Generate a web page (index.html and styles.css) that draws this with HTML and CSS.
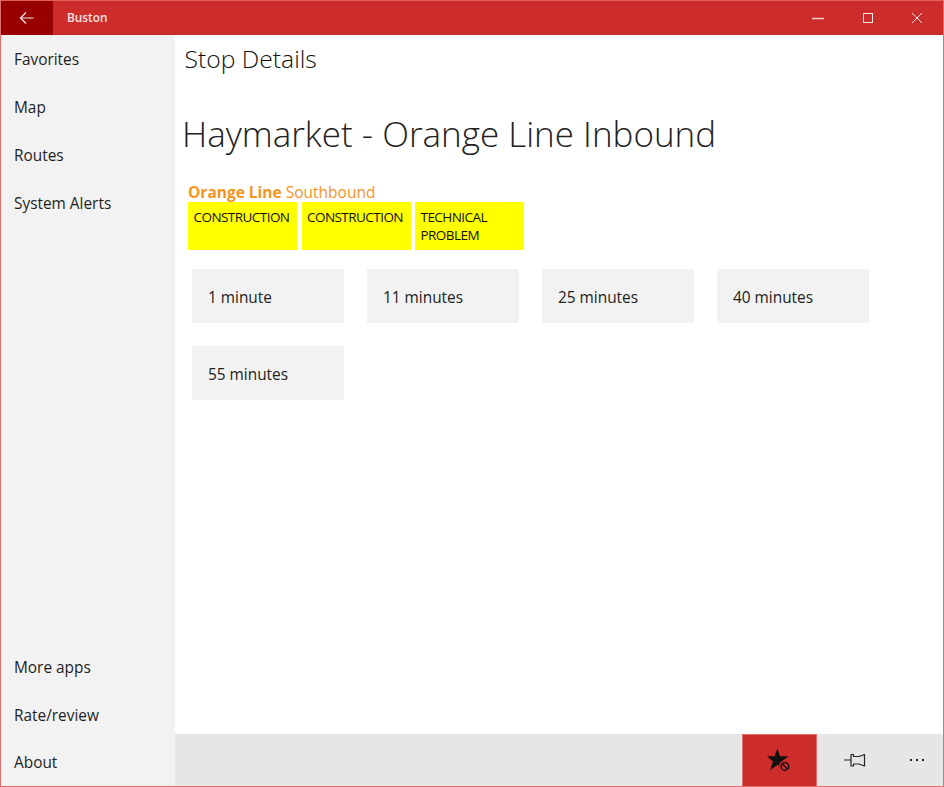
FILE: index.html
```html
<!DOCTYPE html>
<html lang="en">
<head>
<meta charset="utf-8">
<title>Buston</title>
<link rel="stylesheet" href="styles.css">
</head>
<body>
<div class="window">
  <header class="titlebar">
    <button class="back" aria-label="Back">
      <svg width="16" height="14" viewBox="0 0 16 14"><path d="M14.500 7H1.500M7 1.500L1.500 7L7 12.500" fill="none" stroke="#fbe9e9" stroke-width="1.200"/></svg>
    </button>
    <span class="app-name">Buston</span>
    <div class="controls">
      <span class="ctl"><svg width="12" height="12" viewBox="0 0 12 12"><path d="M0 6.500H12" stroke="#f6cfcf" stroke-width="1.500"/></svg></span>
      <span class="ctl"><svg width="12" height="12" viewBox="0 0 12 12"><rect x="1.500" y="1.500" width="9" height="9" fill="none" stroke="#fbe9e9" stroke-width="1"/></svg></span>
      <span class="ctl"><svg width="12" height="12" viewBox="0 0 12 12"><path d="M1 1L11 11M11 1L1 11" stroke="#fbe9e9" stroke-width="1"/></svg></span>
    </div>
  </header>
  <div class="body">
    <nav class="sidebar">
      <ul class="nav-list">
        <li>Favorites</li>
        <li>Map</li>
        <li>Routes</li>
        <li>System Alerts</li>
      </ul>
      <ul class="nav-list">
        <li>More apps</li>
        <li>Rate/review</li>
        <li>About</li>
      </ul>
    </nav>
    <div class="main">
      <main class="content">
        <h2 class="page-title">Stop Details</h2>
        <h1 class="stop-name">Haymarket - Orange Line Inbound</h1>
        <p class="route"><strong>Orange Line</strong> Southbound</p>
        <div class="alerts">
          <div class="alert">CONSTRUCTION</div>
          <div class="alert">CONSTRUCTION</div>
          <div class="alert">TECHNICAL PROBLEM</div>
        </div>
        <div class="times">
          <div class="time">1 minute</div>
          <div class="time">11 minutes</div>
          <div class="time">25 minutes</div>
          <div class="time">40 minutes</div>
          <div class="time">55 minutes</div>
        </div>
      </main>
      <footer class="appbar">
        <button class="app-btn active" aria-label="Unfavorite">
          <svg width="26" height="26" viewBox="0 0 24 24">
            <path d="M9.500 0.500L12 7.500H20L13.500 12.500L16 20.500L9.500 15.500L3 20.500L5.500 12.500L0 7.500H7Z" fill="#111"/>
            <circle cx="16.500" cy="17" r="5.600" fill="#cc2c2a"/>
            <circle cx="16.500" cy="17" r="3.500" fill="none" stroke="#111" stroke-width="1.300"/>
            <path d="M14 14.500L19 19.500" stroke="#111" stroke-width="1.300"/>
          </svg>
        </button>
        <button class="app-btn pin" aria-label="Pin">
          <svg width="24" height="16" viewBox="0 0 24 16"><path d="M1 8H8M8 2.500H10.500V4.500H16L21.500 2.500V14L16 12H10.500V14H8Z" fill="none" stroke="#222" stroke-width="1.200" stroke-linejoin="round"/></svg>
        </button>
        <button class="app-btn more" aria-label="More">
          <span class="dot"></span><span class="dot"></span><span class="dot"></span>
        </button>
      </footer>
    </div>
  </div>
</div>
</body>
</html>
```
FILE: styles.css
```css
* { box-sizing: border-box; }
html, body { margin: 0; height: 100%; }
body { font-family: "Open Sans", "Noto Sans", sans-serif; color: #1a1a1a; background: #fff; }
.window { height: 787px; width: 944px; display: flex; flex-direction: column; border: 1px solid #e0706e; border-top-color: #e0625f; overflow: hidden; }
.titlebar { height: 34px; flex: none; display: flex; align-items: center; background: #cc2c2a; border-bottom: 1px solid #c32826; }
.back { width: 52px; height: 34px; background: #990000; border: 0; padding: 0; display: flex; align-items: center; justify-content: center; }
.app-name { margin-left: 14px; padding-bottom: 2px; font-size: 11.800px; font-weight: 600; color: #fbe3e3; }
.controls { margin-left: auto; display: flex; margin-right: 1px; }
.ctl { width: 49.500px; height: 34px; display: flex; align-items: center; justify-content: center; }
.body { flex: 1; display: flex; min-height: 0; }
.sidebar { width: 174px; flex: none; background: #f2f2f2; display: flex; flex-direction: column; justify-content: space-between; }
.nav-list { list-style: none; margin: 0; padding: 0; }
.nav-list li { height: 48px; padding-left: 13px; display: flex; align-items: center; font-size: 15.400px; color: #1f1f1f; }
.nav-list:last-child li:last-child { height: 47px; }
.main { flex: 1; display: flex; flex-direction: column; min-width: 0; }
.content { flex: 1; padding: 0 0 0 8px; }
.page-title { margin: 4px 0 0 1.500px; font-size: 24.700px; line-height: 40px; font-weight: 300; color: #111; }
.stop-name { margin: 31px 0 0 -1px; font-size: 35px; line-height: 48px; font-weight: 300; color: #222; }
.route { margin: 25px 0 0 5px; font-size: 15.500px; line-height: 19px; font-weight: 400; color: #f7941d; }
.route strong { font-weight: 700; }
.alerts { display: flex; gap: 4.500px; margin: 0 0 0 5px; }
.alert { width: 109px; height: 48px; background: #ffff00; padding: 6px 5.500px; font-size: 13.500px; line-height: 18px; letter-spacing: -0.550px; color: #111; }
.times { margin: 19px 0 0 8.500px; display: flex; flex-wrap: wrap; gap: 23px 22.500px; }
.time { width: 152.500px; height: 54px; background: #f2f2f2; display: flex; align-items: center; padding: 2px 0 0 16.500px; font-size: 15.400px; color: #222; }
.appbar { height: 52px; flex: none; background: #e6e6e6; display: flex; justify-content: flex-end; }
.app-btn { width: 63px; border: 0; padding: 0; background: transparent; display: flex; align-items: center; justify-content: center; }
.app-btn.active { width: 75px; background: #cc2c2a; border: 1px solid #e0706e; border-bottom: 0; }
.app-btn.pin { width: 76px; }
.app-btn.more { width: 50px; gap: 4px; padding-right: 2px; }
.dot { width: 2px; height: 2px; background: #222; }
```
